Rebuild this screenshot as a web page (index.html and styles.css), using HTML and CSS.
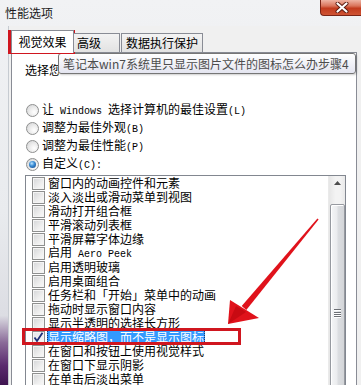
FILE: index.html
```html
<!DOCTYPE html>
<html lang="zh-CN">
<head>
<meta charset="utf-8">
<title>性能选项</title>
<link rel="stylesheet" href="styles.css">
</head>
<body>
<div class="window">
  <div class="titlebar">
    <span class="title">性能选项</span>
    <div class="close">
      <svg width="14" height="11" viewBox="0 0 14 11">
        <path d="M2.5 1.5 L11.5 9.5 M11.5 1.5 L2.5 9.5" stroke="#5a1a10" stroke-width="4" stroke-linecap="round"/>
        <path d="M2.5 1.5 L11.5 9.5 M11.5 1.5 L2.5 9.5" stroke="#ffffff" stroke-width="2.2" stroke-linecap="round"/>
      </svg>
    </div>
  </div>
  <div class="client">
    <div class="tabs">
      <div class="tab active">视觉效果</div>
      <div class="tab adv">高级</div>
      <div class="tab dep">数据执行保护</div>
    </div>
    <div class="panel">
      <p class="intro">选择您希望在此计算机上使用的设置</p>
      <div class="radios">
        <div class="radio"><span class="rb"></span><span class="lbl">让<span class="lat"> Windows </span>选择计算机的最佳设置<span class="lat">(L)</span></span></div>
        <div class="radio"><span class="rb"></span><span class="lbl">调整为最佳外观<span class="lat">(B)</span></span></div>
        <div class="radio"><span class="rb"></span><span class="lbl">调整为最佳性能<span class="lat">(P)</span></span></div>
        <div class="radio"><span class="rb on"></span><span class="lbl">自定义<span class="lat">(C):</span></span></div>
      </div>
      <div class="listbox">
        <ul class="items">
          <li><span class="cb"></span><span class="txt">窗口内的动画控件和元素</span></li>
          <li><span class="cb"></span><span class="txt">淡入淡出或滑动菜单到视图</span></li>
          <li><span class="cb"></span><span class="txt">滑动打开组合框</span></li>
          <li><span class="cb"></span><span class="txt">平滑滚动列表框</span></li>
          <li><span class="cb"></span><span class="txt">平滑屏幕字体边缘</span></li>
          <li><span class="cb"></span><span class="txt">启用<span class="lat"> Aero Peek</span></span></li>
          <li><span class="cb"></span><span class="txt">启用透明玻璃</span></li>
          <li><span class="cb"></span><span class="txt">启用桌面组合</span></li>
          <li><span class="cb"></span><span class="txt">任务栏和「开始」菜单中的动画</span></li>
          <li><span class="cb"></span><span class="txt">拖动时显示窗口内容</span></li>
          <li><span class="cb"></span><span class="txt">显示半透明的选择长方形</span></li>
          <li><span class="cb checked"><svg width="11" height="11" viewBox="0 0 11 11"><path d="M1.5 5.5 L4 9 L9.5 0.8" fill="none" stroke="#1d2f78" stroke-width="1.8"/></svg></span><span class="txt sel">显示缩略图，而不是显示图标</span></li>
          <li><span class="cb"></span><span class="txt">在窗口和按钮上使用视觉样式</span></li>
          <li><span class="cb"></span><span class="txt">在窗口下显示阴影</span></li>
          <li><span class="cb"></span><span class="txt">在单击后淡出菜单</span></li>
        </ul>
        <div class="scrollbar">
          <div class="sb-up">
            <svg width="7" height="4" viewBox="0 0 7 4"><path d="M0 4 L3.5 0 L7 4 Z" fill="#4d4d4d"/></svg>
          </div>
          <div class="sb-thumb">
            <div class="grip"><i></i><i></i><i></i><i></i></div>
          </div>
        </div>
      </div>
    </div>
  </div>

  <div class="tooltip">笔记本win7系统里只显示图片文件的图标怎么办步骤4</div>
  <div class="redbox box-tab"></div>
  <div class="redbox box-item"></div>
  <svg class="arrow" width="361" height="385" viewBox="0 0 361 385">
    <polygon points="318.6,219.4 317.4,218.6 241.7,306.1 246.3,309.9" fill="#e0121b"/>
    <polygon points="228,324 230,300 259,318" fill="#e0121b"/>
    <polygon points="228,324 236,306 246,312" fill="#c80a12"/>
  </svg>
</div>
</body>
</html>
```
FILE: styles.css
```css
* {
  box-sizing: border-box;
  margin: 0;
  padding: 0;
}

html, body {
  width: 361px;
  height: 385px;
  overflow: hidden;
}

body {
  font-family: "Noto Sans CJK SC", sans-serif;
  font-size: 12px;
  color: #000;
  background: #e9ecef;
}

.window {
  position: relative;
  width: 361px;
  height: 385px;
  overflow: hidden;
  background: linear-gradient(to bottom, #f1f2f4 0%, #e9ebee 55%, #dcdde3 82%, #8a6a98 89%, #5a2a6e 95%, #3e1450 100%);
}

.titlebar {
  height: 26px;
  display: flex;
  align-items: flex-start;
}

.title {
  padding: 5px 0 0 5px;
  line-height: 16px;
  font-size: 12px;
  color: #1a1a1a;
}

.close {
  margin-left: auto;
  margin-right: -2px;
  width: 43px;
  height: 16px;
  border: 1px solid #7a2416;
  border-top: none;
  border-right: none;
  border-radius: 0 0 0 4px;
  background: linear-gradient(#eeb4a4 0%, #d9735a 40%, #c23b1e 55%, #cf5434 100%);
  display: flex;
  align-items: center;
  justify-content: center;
}

.client {
  margin-left: 8px;
  background: #f0f0f0;
  border-left: 1px solid #c6cbd1;
  padding: 4px 4px 0 2px;
}

.tabs {
  display: flex;
  align-items: flex-end;
  height: 22px;
  position: relative;
  z-index: 1;
}

.tab {
  height: 19px;
  border: 1px solid #898c95;
  border-bottom: none;
  background: linear-gradient(#f3f3f3, #e2e2e2);
  line-height: 18px;
  text-align: center;
}

.tab.active {
  width: 63px;
  height: 23px;
  margin-bottom: -1px;
  background: #fff;
  line-height: 22px;
}

.tab.adv {
  width: 46px;
  text-align: left;
  padding-left: 3px;
  border-left: none;
  margin-right: 1px;
}

.tab.dep {
  width: 82px;
}

.panel {
  background: #fff;
  border: 1px solid #898c95;
  border-bottom: none;
  padding: 10px 0 0 13px;
}

.intro {
  width: 34px;
  line-height: 14px;
  white-space: nowrap;
  overflow: hidden;
}

.radios {
  margin-top: 24px;
}

.radio {
  height: 18px;
  display: flex;
  align-items: center;
  padding-left: 1px;
}

.rb {
  width: 13px;
  height: 13px;
  border-radius: 50%;
  border: 1px solid #8e8f8f;
  background: radial-gradient(circle at 65% 65%, #ffffff 0%, #eeeeee 40%, #cfd0d1 100%);
  margin-right: 3px;
  display: flex;
  align-items: center;
  justify-content: center;
  flex: none;
}

.rb.on::after {
  content: "";
  width: 7px;
  height: 7px;
  border-radius: 50%;
  background: radial-gradient(circle at 40% 35%, #bfe6ff 0%, #3c8fd6 40%, #0e3d80 100%);
}

.lbl {
  line-height: 14px;
  white-space: nowrap;
}

.lat {
  font-family: "Liberation Mono", monospace;
  font-size: 10px;
  white-space: pre;
}

.listbox {
  margin-top: 2px;
  width: 321px;
  border: 1px solid #828790;
  border-bottom: none;
  display: flex;
  align-items: flex-start;
  height: 240px;
  overflow: hidden;
}

.items {
  list-style: none;
  flex: 1;
}

.items li {
  height: 14px;
  display: flex;
  align-items: center;
  padding-left: 6px;
  white-space: nowrap;
}

.cb {
  width: 13px;
  height: 13px;
  flex: none;
  border: 1px solid #8e8f8f;
  background: linear-gradient(135deg, #d4d5d7 0%, #eeeeee 60%, #fafafa 100%);
  box-shadow: inset 0 0 0 1px #f4f4f4;
  margin-right: 3px;
  display: flex;
  align-items: center;
  justify-content: center;
}

.cb.checked {
  background: linear-gradient(135deg, #e4e6ea 0%, #f6f6f6 100%);
}

.txt {
  line-height: 14px;
}

.txt.sel {
  background: #3399ff;
  color: #fff;
  margin-left: -1px;
  padding: 0 1px;
  outline: 1px dotted #1b3a66;
  outline-offset: -1px;
}

.scrollbar {
  width: 17px;
  flex: none;
  height: 240px;
  background: linear-gradient(to right, #e6e6e6 0%, #f3f3f3 40%, #f3f3f3 70%, #e9e9e9 100%);
  border-left: 1px solid #eaeaea;
  display: flex;
  flex-direction: column;
  align-items: center;
}

.sb-up {
  height: 17px;
  width: 100%;
  display: flex;
  align-items: center;
  justify-content: center;
  padding-bottom: 3px;
}

.sb-thumb {
  margin-top: 12px;
  width: 15px;
  height: 220px;
  border: 1px solid #979aa0;
  border-radius: 2px;
  background: linear-gradient(to right, #f5f6f7 0%, #ebecee 45%, #dcdee1 55%, #d3d5d8 100%);
  box-shadow: inset 1px 1px 0 #fff;
  display: flex;
  justify-content: center;
}

.grip {
  margin-top: 104px;
  width: 7px;
  height: 8px;
  display: flex;
  flex-direction: column;
  justify-content: space-between;
}

.grip i {
  display: block;
  height: 1px;
  background: #6d7075;
  box-shadow: 0 1px 0 #fff;
}

.tooltip {
  position: absolute;
  left: 58px;
  top: 53px;
  width: 298px;
  height: 21px;
  border: 1px solid #767676;
  border-radius: 3px;
  background: linear-gradient(#ffffff, #e4e5f0);
  color: #4c4c4c;
  line-height: 19px;
  padding-left: 4px;
  white-space: nowrap;
  box-shadow: 1px 1px 2px rgba(0,0,0,0.2);
}

.redbox {
  position: absolute;
  border: 3px solid #d0161f;
}

.box-tab {
  left: 8px;
  top: 30px;
  width: 67px;
  height: 24px;
}

.box-item {
  left: 22px;
  top: 328px;
  width: 219px;
  height: 17px;
}

.arrow {
  position: absolute;
  left: 0;
  top: 0;
  pointer-events: none;
}
```
